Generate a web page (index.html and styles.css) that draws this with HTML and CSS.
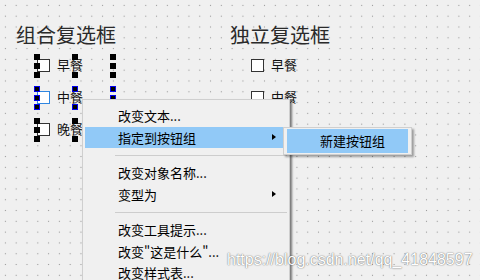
FILE: index.html
```html
<!DOCTYPE html>
<html lang="zh-CN">
<head>
    <meta charset="UTF-8">
    <title>复选框</title>
    <link rel="stylesheet" href="styles.css">
</head>
<body>
    <div class="form">
        <section class="group">
            <h2 class="group-title">组合复选框</h2>
            <div class="rows">
                <div class="widget">
                    <label class="check"><span class="box"></span>早餐</label>
                    <span class="handles h-left"><i></i><i></i><i></i></span>
                    <span class="handles h-mid"><i></i><i></i></span>
                    <span class="handles h-right"><i></i><i></i><i></i></span>
                </div>
                <div class="widget current">
                    <label class="check"><span class="box"></span>中餐</label>
                    <span class="handles h-left"><i></i><i></i><i></i></span>
                    <span class="handles h-mid"><i></i><i></i></span>
                    <span class="handles h-right"><i></i><i></i><i></i></span>
                </div>
                <div class="widget">
                    <label class="check"><span class="box"></span>晚餐</label>
                    <span class="handles h-left"><i></i><i></i><i></i></span>
                    <span class="handles h-mid"><i></i><i></i></span>
                    <span class="handles h-right"><i></i><i></i><i></i></span>
                </div>
            </div>
        </section>
        <section class="group">
            <h2 class="group-title">独立复选框</h2>
            <div class="rows">
                <div class="widget">
                    <label class="check"><span class="box"></span>早餐</label>
                </div>
                <div class="widget">
                    <label class="check"><span class="box"></span>中餐</label>
                </div>
            </div>
        </section>
    </div>

    <!-- context menu -->
    <div class="menu">
        <div class="menu-item">改变文本...</div>
        <div class="menu-item active">指定到按钮组<span class="arrow"></span></div>
        <div class="menu-sep"></div>
        <div class="menu-item">改变对象名称...</div>
        <div class="menu-item">变型为<span class="arrow"></span></div>
        <div class="menu-sep"></div>
        <div class="menu-item">改变工具提示...</div>
        <div class="menu-item">改变"这是什么"...</div>
        <div class="menu-item">改变样式表...</div>
    </div>

    <div class="submenu">
        <div class="submenu-item">新建按钮组</div>
    </div>

    <div class="watermark">https://blog.csdn.net/qq_41848597</div>
</body>
</html>
```

FILE: styles.css
```css
html, body {
    margin: 0;
    padding: 0;
}

/* designer form with dotted grid */
body {
    position: relative;
    height: 280px;
    overflow: hidden;
    background-color: #f0f0f0;
    background-image: radial-gradient(circle, #999 0.65px, transparent 1px);
    background-size: 10.8px 10.8px;
    font-family: "Noto Sans CJK SC", sans-serif;
    color: #000;
}

.form {
    display: flex;
    padding: 24px 0 0 16px;
}

.group {
    width: 214px;
}

.group-title {
    margin: 0;
    font-size: 20px;
    line-height: 22px;
    font-weight: normal;
    color: #2a2a2a;
}

.rows {
    display: flex;
    flex-direction: column;
    gap: 8px;
    margin-top: 8px;
    padding-left: 21px;
}

.widget {
    position: relative;
    width: 76px;
    height: 24px;
    display: flex;
    align-items: center;
}

.check {
    display: flex;
    align-items: center;
    gap: 7px;
    font-size: 13px;
    line-height: 16px;
    padding-bottom: 2px;
    color: #111;
}

.box {
    width: 13px;
    height: 13px;
    box-sizing: border-box;
    border: 1px solid #333;
    background: #fff;
}

.current .box {
    border-color: #2f86e0;
}

/* selection handles */
.handles {
    position: absolute;
    top: 0;
    bottom: 0;
    width: 6px;
    display: flex;
    flex-direction: column;
    justify-content: space-between;
}

.handles i {
    display: block;
    width: 6px;
    height: 6px;
    box-sizing: border-box;
    background: #000;
}

.current .handles i {
    border: 1px solid #0000f0;
}

.h-left { left: -3px; }
.h-mid { left: 35px; }
.h-right { left: 73px; }

/* context menu */
.menu {
    position: absolute;
    left: 82px;
    top: 99px;
    width: 208px;
    height: 200px;
    box-sizing: border-box;
    padding: 5px 2px 0;
    background: #f0f0f0;
    border: 1px solid #cfcfcf;
    box-shadow: 2px 2px 2px rgba(0, 0, 0, 0.5);
}

.menu-item {
    display: flex;
    align-items: center;
    justify-content: space-between;
    height: 21.5px;
    padding: 0 11px 0 33px;
    font-size: 13px;
    white-space: nowrap;
}

.menu-item.active {
    background: #91c9f7;
}

.arrow {
    width: 0;
    height: 0;
    border-left: 4px solid #000;
    border-top: 3.5px solid transparent;
    border-bottom: 3.5px solid transparent;
}

.menu-sep {
    height: 1px;
    margin: 6.5px 0 6.5px 30px;
    background: #cdcdcd;
}

.submenu {
    position: absolute;
    left: 283px;
    top: 127px;
    width: 129px;
    height: 28px;
    box-sizing: border-box;
    padding: 1px 3px;
    background: #f0f0f0;
    border: 1px solid #cfcfcf;
    box-shadow: 2px 2px 2px rgba(0, 0, 0, 0.35);
}

.submenu-item {
    height: 24px;
    line-height: 24px;
    padding-left: 33px;
    font-size: 13px;
    background: #91c9f7;
}

.watermark {
    position: absolute;
    left: 227px;
    top: 251px;
    font-family: "Liberation Sans", Arial, sans-serif;
    font-size: 16px;
    line-height: 18px;
    color: #fff;
    text-shadow: 0 0 1px rgba(0, 0, 0, 0.55), 0 0 2px rgba(0, 0, 0, 0.3);
    white-space: nowrap;
}
```
